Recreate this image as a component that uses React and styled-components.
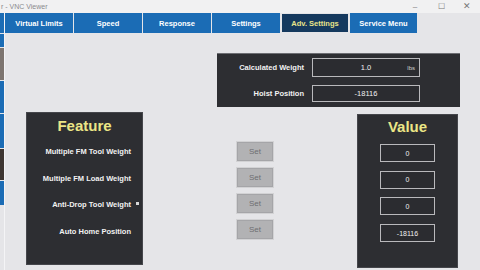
import React from "react";
import styled, { createGlobalStyle } from "styled-components";

const Global = createGlobalStyle`
  html, body { margin: 0; padding: 0; background: #e6e6e9; }
  * { box-sizing: border-box; }
`;

const Page = styled.div`
  width: 480px;
  height: 270px;
  overflow: hidden;
  background: #e5e5e8;
  font-family: "Liberation Sans", Arial, sans-serif;
  display: flex;
  flex-direction: column;
`;

const TitleBar = styled.div`
  height: 13px;
  flex: none;
  display: flex;
  align-items: center;
  justify-content: space-between;
  background: #f1f1f2;
  color: #8a8a8e;
  font-size: 7px;
  padding-left: 1px;
`;

const Controls = styled.div`
  display: flex;
  align-items: center;
  height: 100%;
`;

const Ctl = styled.span`
  width: 26px;
  text-align: center;
  color: #777;
  font-size: ${(p) => p.size || 8}px;
  line-height: 13px;
`;

const Body = styled.div`
  flex: 1;
  display: flex;
  min-height: 0;
`;

const Strip = styled.div`
  width: 4px;
  flex: none;
  display: flex;
  flex-direction: column;
  gap: 1px;
  padding-top: 0;
`;

const StripSeg = styled.div`
  height: ${(p) => p.h}px;
  flex: none;
  background: ${(p) => p.c};
`;

const Main = styled.div`
  flex: 1;
  display: flex;
  flex-direction: column;
  border-left: 1px solid #f4f4f6;
`;

const TabBar = styled.div`
  height: 20px;
  flex: none;
  display: flex;
  gap: 1px;
`;

const Tab = styled.div`
  width: ${(p) => p.w || 68}px;
  height: ${(p) => (p.active ? 18 : 20)}px;
  margin-top: ${(p) => (p.active ? 1 : 0)}px;
  margin-left: ${(p) => p.ml || 0}px;
  background: ${(p) => (p.active ? "#15395e" : "#1b6cb5")};
  color: ${(p) => (p.active ? "#e9e38a" : "#ffffff")};
  font-weight: bold;
  font-size: 7.5px;
  display: flex;
  align-items: center;
  justify-content: center;
  white-space: nowrap;
`;

const Canvas = styled.div`
  flex: 1;
  display: flex;
  flex-direction: column;
  padding-top: 20px;
`;

const TopPanel = styled.div`
  margin-left: 212px;
  width: 243px;
  height: 54px;
  background: #2d2e32;
  border-top: 1px solid #6c6d72;
  display: grid;
  grid-template-columns: 87px 108px;
  grid-template-rows: 19px 17px;
  column-gap: 8px;
  row-gap: 8px;
  padding-top: 4px;
  align-content: start;
`;

const TopLabel = styled.div`
  color: #f2f2f2;
  font-weight: bold;
  font-size: 7.5px;
  text-align: right;
  display: flex;
  align-items: center;
  justify-content: flex-end;
`;

const Field = styled.div`
  border: 1px solid #b9b9bc;
  background: #2b2c30;
  color: #f0f0f0;
  font-size: 7.5px;
  display: grid;
  grid-template-columns: 1fr auto 1fr;
  align-items: center;
  padding: 0 4px;
`;

const Unit = styled.span`
  justify-self: end;
  font-size: 6px;
  color: #cfcfcf;
`;

const LowerRow = styled.div`
  display: flex;
  align-items: flex-start;
  margin-top: 5px;
  margin-left: 21px;
`;

const Panel = styled.div`
  width: ${(p) => p.w}px;
  height: ${(p) => p.h}px;
  margin-left: ${(p) => p.ml || 0}px;
  margin-top: ${(p) => p.mt || 0}px;
  background: #2d2e32;
  border: 1px solid #45464b;
  display: flex;
  flex-direction: column;
`;

const PanelTitle = styled.div`
  height: ${(p) => p.h || 24}px;
  flex: none;
  display: flex;
  align-items: center;
  justify-content: center;
  color: #ebe686;
  font-weight: bold;
  font-size: 15px;
`;

const FeatureRow = styled.div`
  height: 26.7px;
  flex: none;
  display: flex;
  align-items: center;
  justify-content: flex-end;
  padding-right: 2px;
  color: #f2f2f2;
  font-weight: bold;
  font-size: 7.5px;
  white-space: nowrap;
`;

const Marker = styled.span`
  width: 3px;
  height: 3px;
  margin-left: 5px;
  margin-right: 1px;
  margin-top: -3px;
  background: ${(p) => (p.show ? "#d8d8d8" : "transparent")};
`;

const ButtonCol = styled.div`
  display: flex;
  flex-direction: column;
  gap: 5px;
  margin-left: 93px;
  margin-top: 29px;
`;

const SetButton = styled.div`
  width: 38px;
  height: 21px;
  background: #b2b2b4;
  border: 1px solid #d2d2d4;
  box-shadow: inset 0 0 0 1px #a5a5a8;
  color: #6e6e72;
  font-size: 8px;
  display: flex;
  align-items: center;
  justify-content: center;
`;

const ValueList = styled.div`
  display: flex;
  flex-direction: column;
  align-items: center;
  gap: 8.7px;
  padding-top: 6px;
`;

const ValueBox = styled.div`
  width: 55px;
  height: 18px;
  border: 1px solid #b9b9bc;
  background: #2b2c30;
  color: #f0f0f0;
  font-size: 7px;
  display: flex;
  align-items: center;
  justify-content: center;
`;

const tabs = [
  { t: "Virtual Limits" },
  { t: "Speed" },
  { t: "Response" },
  { t: "Settings", w: 68 },
  { t: "Adv. Settings", active: true, w: 66, ml: 1 },
  { t: "Service Menu", w: 67, ml: 1 },
];

const features = [
  { t: "Multiple FM Tool Weight" },
  { t: "Multiple FM Load Weight" },
  { t: "Anti-Drop Tool Weight", m: true },
  { t: "Auto Home Position" },
];

const values = ["0", "0", "0", "-18116"];

const strip = [
  { h: 20, c: "#1b6cb5" },
  { h: 13, c: "#1b6cb5" },
  { h: 32, c: "#7d7570" },
  { h: 32, c: "#1b6cb5" },
  { h: 34, c: "#1b6cb5" },
  { h: 31, c: "#3e3632" },
  { h: 24, c: "#1b6cb5" },
];

export default function App() {
  return (
    <Page>
      <Global />
      <TitleBar>
        <span>r - VNC Viewer</span>
        <Controls>
          <Ctl size={8}>–</Ctl>
          <Ctl size={8}>☐</Ctl>
          <Ctl size={9}>✕</Ctl>
        </Controls>
      </TitleBar>
      <Body>
        <Strip>
          {strip.map((s, i) => (
            <StripSeg key={i} h={s.h} c={s.c} />
          ))}
        </Strip>
        <Main>
          <TabBar>
            {tabs.map((t) => (
              <Tab key={t.t} active={t.active} w={t.w} ml={t.ml}>
                {t.t}
              </Tab>
            ))}
          </TabBar>
          <Canvas>
            <TopPanel>
              <TopLabel>Calculated Weight</TopLabel>
              <Field>
                <span />
                <span>1.0</span>
                <Unit>lbs</Unit>
              </Field>
              <TopLabel>Hoist Position</TopLabel>
              <Field>
                <span />
                <span>-18116</span>
                <span />
              </Field>
            </TopPanel>
            <LowerRow>
              <Panel w={117} h={153}>
                <PanelTitle h={25}>Feature</PanelTitle>
                {features.map((f) => (
                  <FeatureRow key={f.t}>
                    {f.t}
                    <Marker show={f.m} />
                  </FeatureRow>
                ))}
              </Panel>
              <ButtonCol>
                {features.map((f) => (
                  <SetButton key={f.t}>Set</SetButton>
                ))}
              </ButtonCol>
              <Panel w={101} h={154} ml={83} mt={2}>
                <PanelTitle h={23}>Value</PanelTitle>
                <ValueList>
                  {values.map((v, i) => (
                    <ValueBox key={i}>{v}</ValueBox>
                  ))}
                </ValueList>
              </Panel>
            </LowerRow>
          </Canvas>
        </Main>
      </Body>
    </Page>
  );
}
